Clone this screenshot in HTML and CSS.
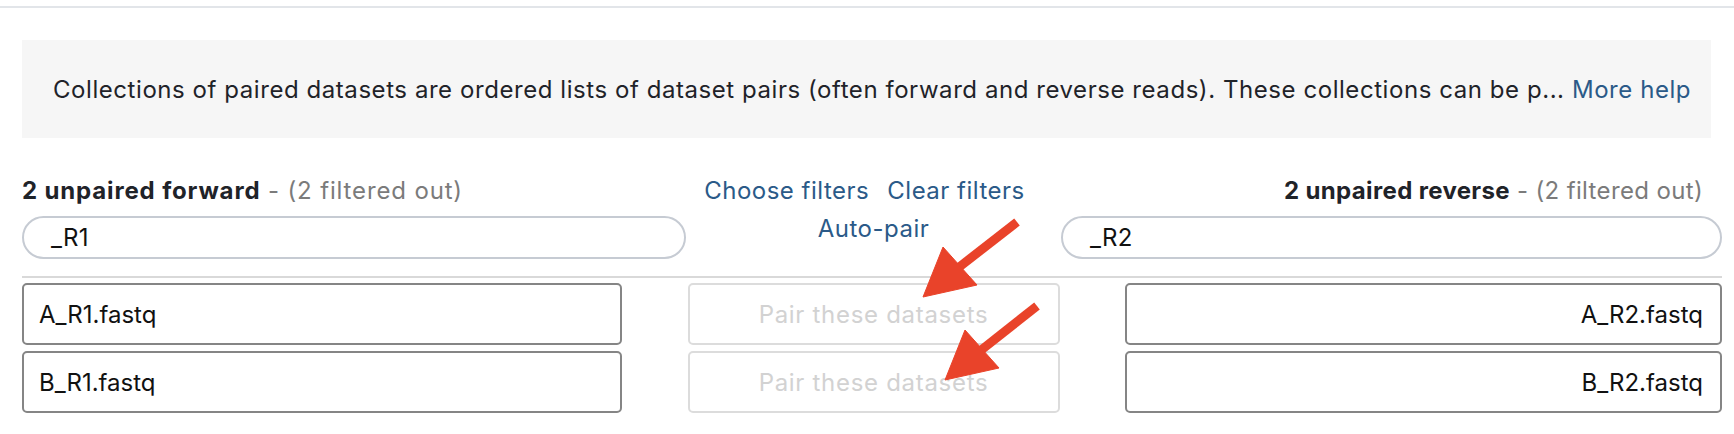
FILE: index.html
```html
<!DOCTYPE html>
<html lang="en">
<head>
<meta charset="utf-8">
<title>Paired collection creator</title>
<link rel="stylesheet" href="styles.css">
</head>
<body>
<div class="page">
  <div class="top-rule"></div>
  <div class="help">
    <span>Collections of paired datasets are ordered lists of dataset pairs (often forward and reverse reads). These collections can be p...&nbsp;<a class="link" href="#">More help</a></span>
  </div>
  <div class="creator">
    <div class="header-grid">
      <div class="col col-fwd">
        <div class="title"><b>2 unpaired forward</b> <span class="muted">- (2 filtered out)</span></div>
        <div class="search">_R1</div>
      </div>
      <div class="col col-mid">
        <div class="filter-links"><a class="link" href="#">Choose filters</a><a class="link" href="#">Clear filters</a></div>
        <div class="autopair"><a class="link" href="#">Auto-pair</a></div>
      </div>
      <div class="col col-rev">
        <div class="title title-right"><b>2 unpaired reverse</b> <span class="muted">- (2 filtered out)</span></div>
        <div class="search">_R2</div>
      </div>
    </div>
    <div class="sep"></div>
    <div class="rows">
      <div class="dataset fwd">A_R1.fastq</div>
      <div class="pair-btn">Pair these datasets</div>
      <div class="dataset rev">A_R2.fastq</div>
      <div class="dataset fwd">B_R1.fastq</div>
      <div class="pair-btn">Pair these datasets</div>
      <div class="dataset rev">B_R2.fastq</div>
    </div>
  </div>
  <svg class="annotations" width="1734" height="434" viewBox="0 0 1734 434" aria-hidden="true">
    <g fill="#e9432a" stroke="#e9432a">
      <line x1="1017" y1="222" x2="958" y2="268" stroke-width="9"/>
      <polygon points="923,297 943,247 977,285" stroke-width="1" stroke-linejoin="round"/>
      <line x1="1037" y1="306" x2="980" y2="351" stroke-width="9"/>
      <polygon points="945,380 965,330 999,368" stroke-width="1" stroke-linejoin="round"/>
    </g>
  </svg>
</div>
</body>
</html>
```

FILE: styles.css
```css
html, body {
  margin: 0;
  padding: 0;
  background: #ffffff;
}

body {
  font-family: "Inter", "Noto Sans", "Liberation Sans", sans-serif;
  font-size: 24px;
  line-height: 29px;
  letter-spacing: 0.5px;
  color: #1f2329;
}

.page {
  position: relative;
  width: 1734px;
  height: 434px;
  overflow: hidden;
}

.top-rule {
  margin-top: 6px;
  height: 2px;
  background: #e2e5e9;
}

.help {
  margin: 32px 0 0 22px;
  width: 1689px;
  height: 98px;
  box-sizing: border-box;
  padding-left: 31px;
  background: #f6f6f6;
  display: flex;
  align-items: center;
  white-space: nowrap;
  letter-spacing: 0.56px;
}

.link {
  color: #2b5a88;
  text-decoration: none;
}

.creator {
  margin-left: 22px;
  width: 1700px;
}

.header-grid {
  display: grid;
  grid-template-columns: 664px 375px 661px;
  margin-top: 33px;
}

.title {
  margin-top: 5px;
  white-space: nowrap;
  letter-spacing: 0.85px;
}

.title b {
  font-weight: 700;
}

.title-right {
  text-align: right;
  padding-right: 19px;
  letter-spacing: 0.35px;
}

.muted {
  color: #7b7b7b;
}

.search {
  margin-top: 11px;
  height: 43px;
  box-sizing: border-box;
  border: 2px solid #c6cbd3;
  border-radius: 22px;
  padding-left: 27px;
  display: flex;
  align-items: center;
  color: #111;
  letter-spacing: 0.3px;
}

.col-mid {
  text-align: center;
}

.filter-links {
  margin-top: 5px;
  padding-right: 18px;
  display: flex;
  justify-content: center;
  gap: 18px;
}

.autopair {
  margin-top: 9px;
}

.sep {
  margin-top: 17px;
  height: 2px;
  background: #d9d9d9;
}

.rows {
  margin-top: 5px;
  display: grid;
  grid-template-columns: 600px 372px 597px;
  column-gap: 65.5px;
  row-gap: 6px;
}

.dataset {
  height: 62px;
  box-sizing: border-box;
  border: 2px solid #858585;
  border-radius: 5px;
  display: flex;
  align-items: center;
  color: #111;
  letter-spacing: 0;
}

.dataset.fwd {
  padding-left: 15px;
}

.dataset.rev {
  justify-content: flex-end;
  padding-right: 17px;
}

.pair-btn {
  height: 62px;
  box-sizing: border-box;
  border: 2px solid #dcdcdc;
  border-radius: 5px;
  display: flex;
  align-items: center;
  justify-content: center;
  color: #d2d2d2;
  letter-spacing: 0.7px;
}

.annotations {
  position: absolute;
  left: 0;
  top: 0;
  pointer-events: none;
}
```
